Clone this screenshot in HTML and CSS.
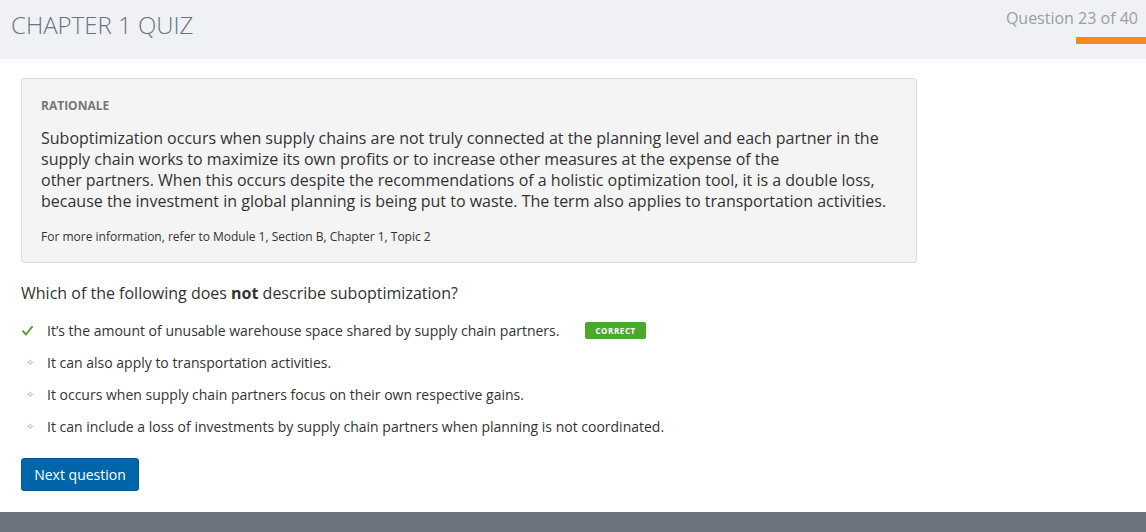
FILE: index.html
```html
<!DOCTYPE html>
<html>
<head>
<meta charset="utf-8">
<link rel="stylesheet" href="styles.css">
</head>
<body>
<header class="top">
  <h1 class="title">CHAPTER 1 QUIZ</h1>
  <div class="progress">
    <div class="progress-text">Question 23 of 40</div>
    <div class="progress-bar"></div>
  </div>
</header>
<main class="content">
  <section class="rationale">
    <div class="rationale-label">RATIONALE</div>
    <p class="rationale-text">Suboptimization occurs when supply chains are not truly connected at the planning level and each partner in the supply chain works to maximize its own profits or to increase other measures at the expense of the<br>other partners. When this occurs despite the recommendations of a holistic optimization tool, it is a double loss, because the investment in global planning is being put to waste. The term also applies to transportation activities.</p>
    <p class="rationale-note">For more information, refer to Module 1, Section B, Chapter 1, Topic 2</p>
  </section>
  <p class="question">Which of the following does <strong>not</strong> describe suboptimization?</p>
  <ul class="options">
    <li class="option"><span class="mark check"><svg width="11" height="10" viewBox="0 0 11 10"><path d="M1 5.2 L4 8.5 L10 0.8" fill="none" stroke="#5a9a2a" stroke-width="1.9" stroke-linecap="round" stroke-linejoin="round"/></svg></span><span>It’s the amount of unusable warehouse space shared by supply chain partners.</span><span class="badge">CORRECT</span></li>
    <li class="option"><span class="mark dot">&#10023;</span><span>It can also apply to transportation activities.</span></li>
    <li class="option"><span class="mark dot">&#10023;</span><span>It occurs when supply chain partners focus on their own respective gains.</span></li>
    <li class="option"><span class="mark dot">&#10023;</span><span>It can include a loss of investments by supply chain partners when planning is not coordinated.</span></li>
  </ul>
  <button class="next">Next question</button>
</main>
<footer class="footer"></footer>
</body>
</html>
```

FILE: styles.css
```css
* { box-sizing: border-box; }
html, body { margin: 0; padding: 0; }
body {
  font-family: "Open Sans", "Liberation Sans", sans-serif;
  color: #333;
  background: #fff;
  width: 1146px;
  height: 532px;
  overflow: hidden;
  display: flex;
  flex-direction: column;
}
.top {
  height: 59px;
  background: #eff1f5;
  display: flex;
  justify-content: space-between;
  align-items: flex-start;
  flex-shrink: 0;
}
.title {
  margin: 8px 0 0 11px;
  font-weight: 300;
  font-size: 24px;
  line-height: 34px;
  color: #6b7380;
  letter-spacing: 0;
}
.progress {
  display: flex;
  flex-direction: column;
  align-items: flex-end;
  padding-top: 7px;
}
.progress-text {
  font-size: 16px;
  line-height: 22px;
  color: #9a9ea4;
  margin-right: 8px;
}
.progress-bar {
  margin-top: 8px;
  width: 70px;
  height: 7px;
  background: #f28a1e;
}
.content {
  flex: 1;
  padding: 19px 0 0 21px;
}
.rationale {
  width: 896px;
  background: #f4f4f4;
  border: 1px solid #dcdcdc;
  border-radius: 3px;
  padding: 18px 20px 17px 19px;
}
.rationale-label {
  font-size: 12px;
  font-weight: 700;
  color: #777;
  line-height: 17px;
}
.rationale-text {
  margin: 14px 0 0;
  font-size: 16px;
  line-height: 21px;
  color: #333;
}
.rationale-note {
  margin: 16px 0 0;
  font-size: 12px;
  line-height: 17px;
  color: #333;
}
.question {
  margin: 19px 0 0;
  font-size: 16px;
  line-height: 22px;
  color: #333;
}
.options {
  list-style: none;
  margin: 10px 0 0;
  padding: 0;
}
.option {
  display: flex;
  align-items: center;
  height: 32px;
  font-size: 14px;
  color: #333;
}
.mark {
  width: 26px;
  flex-shrink: 0;
}
.check {
  display: flex;
  align-items: center;
  padding-left: 1px;
  padding-top: 2px;
}
.dot {
  color: #aaa;
  font-size: 10px;
  padding-left: 5px;
}
.badge {
  margin-left: 26px;
  background: #4aa92c;
  color: #fff;
  font-size: 8px;
  font-weight: 700;
  letter-spacing: 0.6px;
  padding: 3px 10px;
  line-height: 11px;
  border-radius: 2px;
}
.next {
  margin-top: 16px;
  width: 118px;
  height: 33px;
  background: #0066aa;
  border: 1px solid #005590;
  border-radius: 3px;
  color: #fff;
  font-family: "Open Sans", "Liberation Sans", sans-serif;
  font-size: 14px;
  font-weight: 500;
  padding: 0;
}
.footer {
  height: 20px;
  background: #6b747d;
  flex-shrink: 0;
}
```
